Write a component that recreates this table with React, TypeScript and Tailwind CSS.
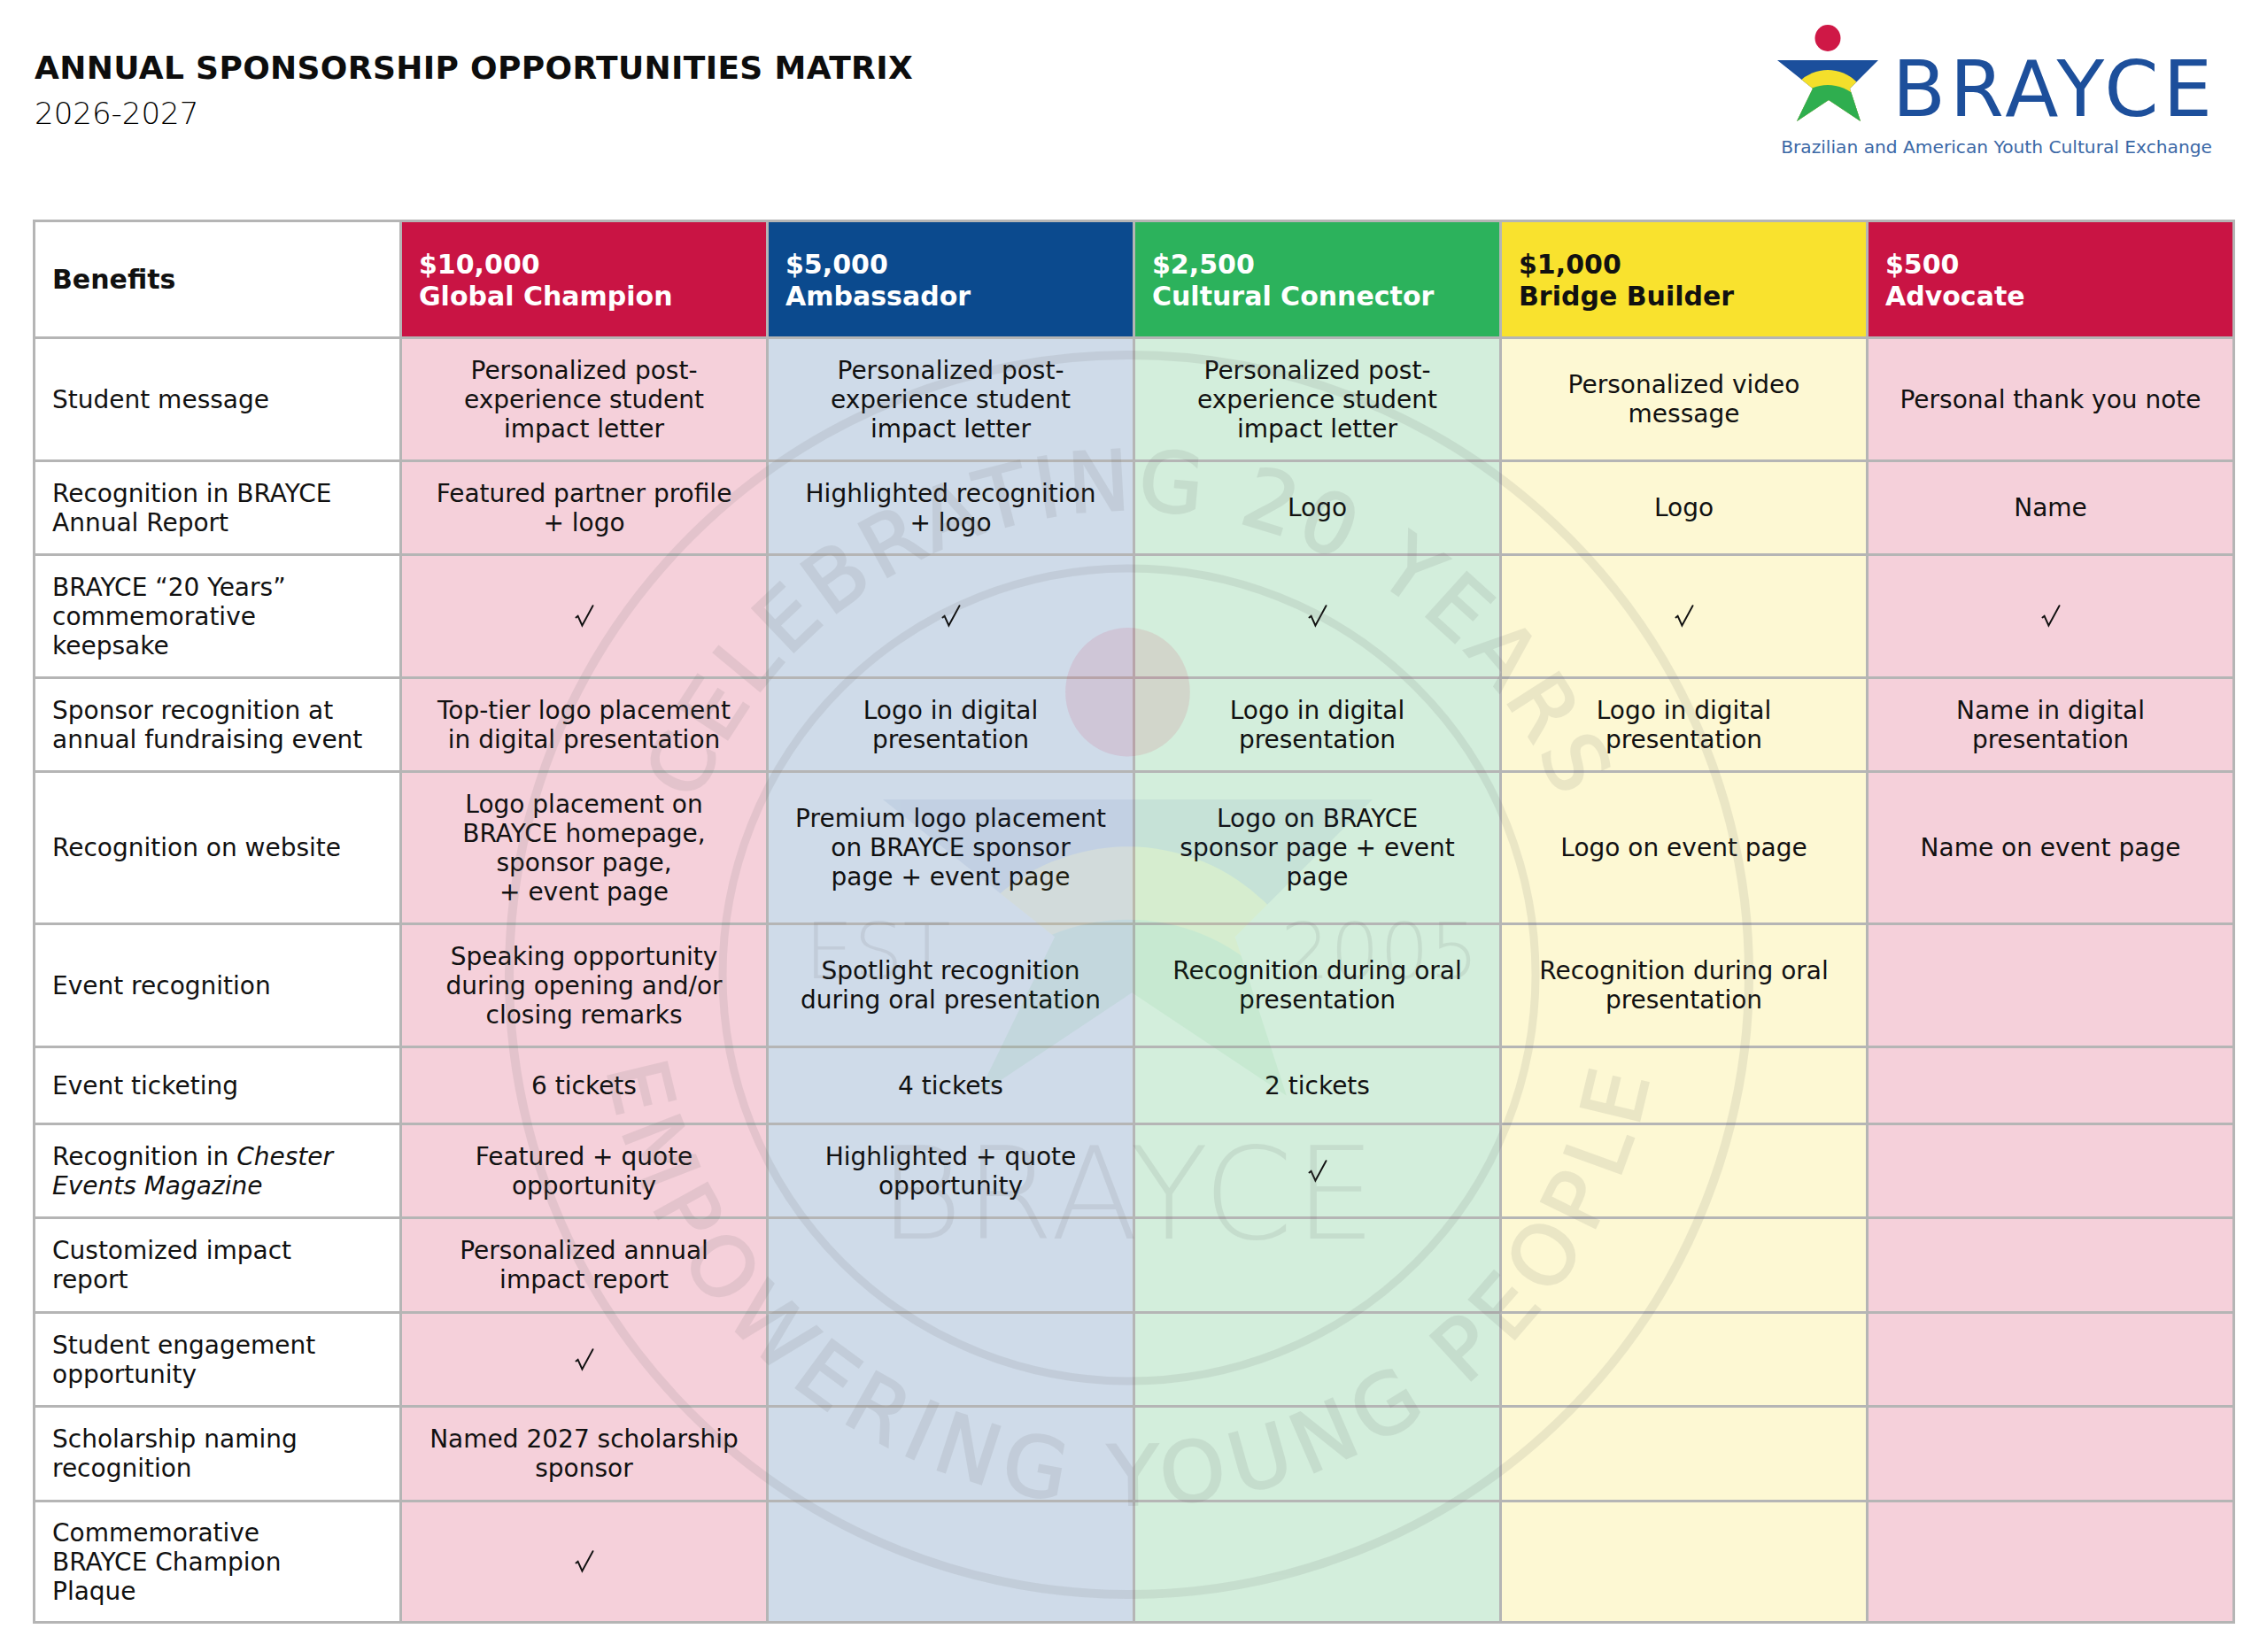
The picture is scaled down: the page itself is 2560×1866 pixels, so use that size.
import React from "react";

type Cell = string[] | "check" | null;

function Check() {
  return (
    <svg width="22" height="26" viewBox="0 0 22 26" className="block">
      <path d="M1.5 14.5 L3.6 12.8 L8.4 23.5 L20.5 1.2" fill="none" stroke="#111" strokeWidth="1.9" strokeLinejoin="miter" strokeLinecap="round" />
    </svg>
  );
}

function LogoMark({ size = 1, dotOpacity = 1, starOpacity = 1 }: { size?: number; dotOpacity?: number; starOpacity?: number }) {
  const id = "clip" + String(size).replace(".", "_");
  return (
    <g transform={`scale(${size})`}>
      <defs>
        <clipPath id={id}>
          <polygon points="0,40 114,40 82,72 94,109 58,85 22,109 40,72" />
        </clipPath>
      </defs>
      <ellipse cx="57" cy="15" rx="14.5" ry="15" fill="#cf1846" opacity={dotOpacity} />
      <g clipPath={`url(#${id})`} opacity={starOpacity}>
        <rect x="0" y="38" width="114" height="75" fill="#1b4f9c" />
        <circle cx="57" cy="97" r="46" fill="#f4df2b" />
        <circle cx="57" cy="114" r="46" fill="#2fae4f" />
      </g>
    </g>
  );
}

const rows: { label: React.ReactNode; cells: Cell[] }[] = [
  {
    label: <>Student message</>,
    cells: [
      ["Personalized post-", "experience student", "impact letter"],
      ["Personalized post-", "experience student", "impact letter"],
      ["Personalized post-", "experience student", "impact letter"],
      ["Personalized video", "message"],
      ["Personal thank you note"],
    ],
  },
  {
    label: (
      <>
        Recognition in BRAYCE
        <br />
        Annual Report
      </>
    ),
    cells: [
      ["Featured partner profile", "+ logo"],
      ["Highlighted recognition", "+ logo"],
      ["Logo"],
      ["Logo"],
      ["Name"],
    ],
  },
  {
    label: (
      <>
        BRAYCE “20 Years”
        <br />
        commemorative
        <br />
        keepsake
      </>
    ),
    cells: ["check", "check", "check", "check", "check"],
  },
  {
    label: (
      <>
        Sponsor recognition at
        <br />
        annual fundraising event
      </>
    ),
    cells: [
      ["Top-tier logo placement", "in digital presentation"],
      ["Logo in digital", "presentation"],
      ["Logo in digital", "presentation"],
      ["Logo in digital", "presentation"],
      ["Name in digital", "presentation"],
    ],
  },
  {
    label: <>Recognition on website</>,
    cells: [
      ["Logo placement on", "BRAYCE homepage,", "sponsor page,", "+ event page"],
      ["Premium logo placement", "on BRAYCE sponsor", "page + event page"],
      ["Logo on BRAYCE", "sponsor page + event", "page"],
      ["Logo on event page"],
      ["Name on event page"],
    ],
  },
  {
    label: <>Event recognition</>,
    cells: [
      ["Speaking opportunity", "during opening and/or", "closing remarks"],
      ["Spotlight recognition", "during oral presentation"],
      ["Recognition during oral", "presentation"],
      ["Recognition during oral", "presentation"],
      null,
    ],
  },
  {
    label: <>Event ticketing</>,
    cells: [["6 tickets"], ["4 tickets"], ["2 tickets"], null, null],
  },
  {
    label: (
      <>
        Recognition in <em>Chester</em>
        <br />
        <em>Events Magazine</em>
      </>
    ),
    cells: [
      ["Featured + quote", "opportunity"],
      ["Highlighted + quote", "opportunity"],
      "check",
      null,
      null,
    ],
  },
  {
    label: (
      <>
        Customized impact
        <br />
        report
      </>
    ),
    cells: [["Personalized annual", "impact report"], null, null, null, null],
  },
  {
    label: (
      <>
        Student engagement
        <br />
        opportunity
      </>
    ),
    cells: ["check", null, null, null, null],
  },
  {
    label: (
      <>
        Scholarship naming
        <br />
        recognition
      </>
    ),
    cells: [["Named 2027 scholarship", "sponsor"], null, null, null, null],
  },
  {
    label: (
      <>
        Commemorative
        <br />
        BRAYCE Champion
        <br />
        Plaque
      </>
    ),
    cells: ["check", null, null, null, null],
  },
];

const bodyBg = ["bg-[#f5d0da]", "bg-[#cfdbe9]", "bg-[#d3eedc]", "bg-[#fdf8d3]", "bg-[#f5d0da]"];

const tiers = [
  { price: "$10,000", name: "Global Champion", cls: "bg-[#c91444] text-white" },
  { price: "$5,000", name: "Ambassador", cls: "bg-[#0b4a8e] text-white" },
  { price: "$2,500", name: "Cultural Connector", cls: "bg-[#2cb25c] text-white" },
  { price: "$1,000", name: "Bridge Builder", cls: "bg-[#f9e22e] text-[#111]" },
  { price: "$500", name: "Advocate", cls: "bg-[#c91444] text-white" },
];

function Watermark() {
  return (
    <svg
      className="absolute left-[555px] top-[381px] pointer-events-none"
      width="1440"
      height="1440"
      viewBox="0 0 1440 1440"
    >
      <defs>
        <path id="topArc" d="M 195 720 A 525 525 0 0 1 1245 720" />
        <path id="botArc" d="M 121 720 A 599 599 0 0 0 1319 720" />
      </defs>
      <g opacity="0.12" fill="#6a6a6a" fontFamily="DejaVu Sans, sans-serif">
        <circle cx="720" cy="720" r="700" fill="none" stroke="#6a6a6a" strokeWidth="10" />
        <circle cx="720" cy="720" r="459" fill="none" stroke="#6a6a6a" strokeWidth="9" />
        <text fontSize="94" letterSpacing="6" stroke="#6a6a6a" strokeWidth="2">
          <textPath href="#topArc" startOffset="50%" textAnchor="middle">
            CELEBRATING 20 YEARS
          </textPath>
        </text>
        <text fontSize="94" letterSpacing="11" stroke="#6a6a6a" strokeWidth="2">
          <textPath href="#botArc" startOffset="50%" textAnchor="middle">
            EMPOWERING YOUNG PEOPLE
          </textPath>
        </text>
        <text x="436" y="724" fontSize="88" textAnchor="middle" fontWeight="300">
          EST
        </text>
        <text x="1003" y="724" fontSize="88" textAnchor="middle" fontWeight="300">
          2005
        </text>
        <text x="719" y="1018" fontSize="145" textAnchor="middle" fontWeight="300" letterSpacing="2">
          BRAYCE
        </text>
      </g>
      <g transform="translate(442 328)">
        <LogoMark size={4.85} dotOpacity={0.11} starOpacity={0.07} />
      </g>
    </svg>
  );
}

export default function App() {
  return (
    <div className="relative w-[2560px] h-[1866px] bg-white font-['DejaVu_Sans',sans-serif] text-[#111] overflow-hidden">
      <div className="flex justify-between h-[248px] pl-[39px] pr-[62px]">
        <div className="pt-[59px]">
          <div className="text-[36px] leading-[36px] font-bold tracking-[0.01em] text-[#0d0d0d]">
            ANNUAL SPONSORSHIP OPPORTUNITIES MATRIX
          </div>
          <div className="mt-[16px] text-[34px] leading-[34px] font-extralight text-black">2026-2027</div>
        </div>
        <div className="pt-[28px] flex flex-col items-end">
          <div className="flex items-start">
            <svg width="114" height="109" viewBox="0 0 114 109" className="block">
              <LogoMark size={1} />
            </svg>
            <span className="ml-[16px] mr-[-5px] mt-[29px] text-[88px] leading-[88px] text-[#1d4f9b] tracking-[0.055em]">
              BRAYCE
            </span>
          </div>
          <div className="mt-[9px] text-[20.2px] leading-[24px] text-[#3b68a6]">
            Brazilian and American Youth Cultural Exchange
          </div>
        </div>
      </div>

      <div className="ml-[37px] w-fit grid grid-cols-[repeat(6,411px)] grid-rows-[129px_136px_103px_136px_103px_169px_136px_84px_103px_104px_103px_104px_134px] gap-[3px] p-[3px] bg-[#b5b5b5]">
        <div className="bg-white flex items-center px-[19px] text-[30px] font-bold">Benefits</div>
        {tiers.map((t) => (
          <div key={t.price} className={`${t.cls} flex flex-col justify-center px-[19px] text-[30px] leading-[36px] font-bold pt-[3px]`}>
            <div>{t.price}</div>
            <div>{t.name}</div>
          </div>
        ))}
        {rows.map((r, ri) => (
          <React.Fragment key={ri}>
            <div className="bg-white flex items-center px-[19px] text-[28px] leading-[33px] whitespace-nowrap">
              <div>{r.label}</div>
            </div>
            {r.cells.map((c, ci) => (
              <div key={ci} className={`${bodyBg[ci]} flex items-center justify-center text-center text-[28px] leading-[33px] whitespace-nowrap`}>
                {c === "check" ? (
                  <Check />
                ) : c ? (
                  <div>
                    {c.map((l, li) => (
                      <div key={li}>{l}</div>
                    ))}
                  </div>
                ) : null}
              </div>
            ))}
          </React.Fragment>
        ))}
      </div>
      <Watermark />
    </div>
  );
}
